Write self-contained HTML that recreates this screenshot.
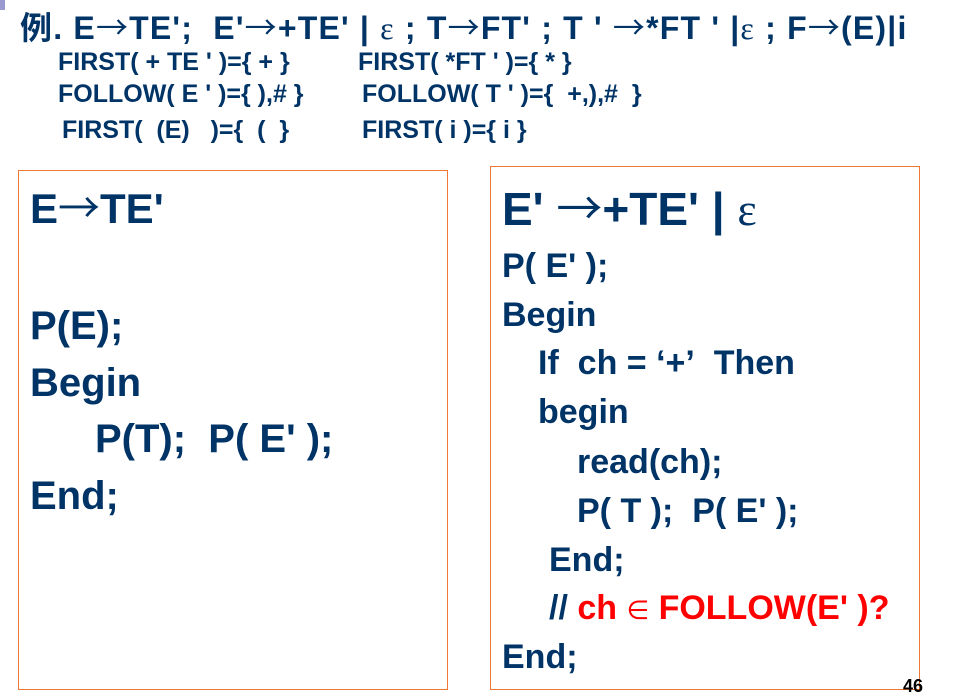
<!DOCTYPE html>
<html><head><meta charset="utf-8"><style>
body{margin:0;width:959px;height:696px;background:#fff;position:relative;overflow:hidden;font-family:"Liberation Sans","Noto Sans CJK SC",sans-serif;font-weight:bold;color:#003366}
.l{position:absolute;white-space:pre;line-height:1}
.a{font-weight:normal;font-family:"Noto Sans CJK SC",sans-serif}
.e{font-weight:normal;font-family:"Liberation Serif",serif}
.box{position:absolute;border:1.5px solid #f07830}
.r{color:#ff0000}
</style></head><body>
<div style="position:absolute;left:0;top:0;width:5px;height:10px;background:#9a9ad0"></div>
<div class="l" style="left:20px;top:10px;font-size:32px;letter-spacing:1.2px">例. E<span class="a">→</span>TE';&nbsp; E'<span class="a">→</span>+TE' | <span class="e">ε</span> ; T<span class="a">→</span>FT' ; T ' <span class="a">→</span>*FT ' |<span class="e">ε</span> ; F<span class="a">→</span>(E)|i</div>
<div class="l" style="left:58px;top:50px;font-size:25px">FIRST( + TE ' )={ + }</div>
<div class="l" style="left:358px;top:50px;font-size:25px">FIRST( *FT ' )={ * }</div>
<div class="l" style="left:58px;top:82px;font-size:25px">FOLLOW( E ' )={ ),# }</div>
<div class="l" style="left:362px;top:82px;font-size:25px">FOLLOW( T ' )={&nbsp; +,),#&nbsp; }</div>
<div class="l" style="left:62px;top:118px;font-size:25px">FIRST(&nbsp; (E)&nbsp;&nbsp; )={&nbsp; (&nbsp; }</div>
<div class="l" style="left:362px;top:118px;font-size:25px">FIRST( i )={ i }</div>

<div class="box" style="left:18px;top:170px;width:428px;height:518px"></div>
<div class="box" style="left:490px;top:166px;width:428px;height:522px"></div>

<div class="l" style="left:30px;top:185px;font-size:42px">E<span class="a">→</span>TE'</div>
<div class="l" style="left:30px;top:306px;font-size:40px">P(E);</div>
<div class="l" style="left:30px;top:363px;font-size:40px">Begin</div>
<div class="l" style="left:95px;top:419px;font-size:40px">P(T);&nbsp; P( E' );</div>
<div class="l" style="left:30px;top:476px;font-size:40px">End;</div>

<div class="l" style="left:502px;top:183px;font-size:46px">E' <span class="a">→</span>+TE' | <span class="e">ε</span></div>
<div class="l" style="left:502px;top:249px;font-size:34px">P( E' );</div>
<div class="l" style="left:502px;top:298px;font-size:34px">Begin</div>
<div class="l" style="left:538px;top:346px;font-size:34px">If&nbsp; ch = ‘+’&nbsp; Then</div>
<div class="l" style="left:538px;top:395px;font-size:34px">begin</div>
<div class="l" style="left:577px;top:445px;font-size:34px">read(ch);</div>
<div class="l" style="left:577px;top:494px;font-size:34px">P( T );&nbsp; P( E' );</div>
<div class="l" style="left:549px;top:543px;font-size:34px">End;</div>
<div class="l" style="left:549px;top:591px;font-size:34px">// <span class="r">ch <span style="font-weight:normal;font-family:'DejaVu Sans',sans-serif;font-size:26px">∈</span> FOLLOW(E' )?</span></div>
<div class="l" style="left:502px;top:640px;font-size:34px">End;</div>
<div class="l" style="left:903px;top:677px;font-size:18px;color:#000">46</div>
</body></html>
